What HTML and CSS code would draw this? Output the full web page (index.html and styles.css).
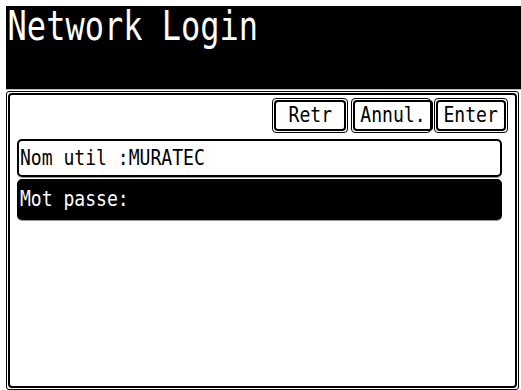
FILE: index.html
```html
<!DOCTYPE html>
<html lang="fr">
<head>
    <meta charset="UTF-8">
    <meta name="viewport" content="width=device-width, initial-scale=1.0">
    <title>Network Login</title>
    <link rel="stylesheet" href="styles.css">
</head>
<body>
    <div class="screen">
        <div class="header">
            <span class="title">Network Login</span>
        </div>

        <div class="panel">
            <div class="panel-inner">
                <div class="actions">
                    <div class="btn btn-retr"><span class="btn-face"><span class="txt">Retr</span></span></div>
                    <div class="btn btn-annul"><span class="btn-face"><span class="txt">Annul.</span></span></div>
                    <div class="btn btn-enter"><span class="btn-face"><span class="txt">Enter</span></span></div>
                </div>

                <div class="field">
                    <span class="txt">Nom util :MURATEC</span>
                </div>
                <div class="field field-active">
                    <span class="txt">Mot passe:</span>
                </div>
            </div>
        </div>
    </div>
</body>
</html>
```

FILE: styles.css
```css
html, body {
    margin: 0;
    padding: 0;
    background: #fff;
}
body {
    font-family: "DejaVu Sans Mono", "Liberation Mono", monospace;
    color: #000;
}
.screen {
    width: 521px;
    height: 390px;
    padding: 6px 0 0 6px;
    box-sizing: border-box;
    display: flex;
    flex-direction: column;
}

/* title bar */
.header {
    height: 83px;
    background: #000;
    border-bottom: 1px solid #bbb;
    color: #fff;
}
.title {
    display: block;
    width: max-content;
    font-size: 40px;
    line-height: 48px;
    margin-top: -4px;
    padding-left: 2px;
    transform: scaleX(0.8);
    transform-origin: left center;
}

/* main frame, double line */
.panel {
    flex: 1;
    width: 513px;
    margin-top: 1px;
    border: 1px solid #000;
    padding: 1px;
    box-sizing: border-box;
    border-radius: 3px;
    display: flex;
}
.panel-inner {
    flex: 1;
    border: 2px solid #000;
    border-radius: 4px;
    padding: 3px 5px 0 5px;
    display: flex;
    flex-direction: column;
}

.txt {
    display: inline-block;
    font-size: 21px;
    line-height: 25px;
    white-space: pre;
    transform: scaleX(0.86);
    transform-origin: left center;
}

/* buttons */
.actions {
    display: flex;
    justify-content: flex-end;
    gap: 3px;
    padding-right: 2px;
}
.btn {
    height: 35px;
    box-sizing: border-box;
    border: 1px solid #000;
    border-radius: 4px;
    padding: 1px;
    display: flex;
}
.btn-retr { width: 76px; }
.btn-annul { width: 80px; }
.btn-enter { width: 74px; }
.btn-face {
    flex: 1;
    border: 2px solid #000;
    border-radius: 4px;
    display: flex;
    align-items: center;
    justify-content: center;
}
.btn-face .txt {
    transform-origin: center center;
}

/* input rows */
.field {
    height: 38px;
    box-sizing: border-box;
    margin: 6px 8px 0 2px;
    border: 2px solid #000;
    border-radius: 5px;
    box-shadow: 0 1px 0 #999;
    padding-left: 1px;
    display: flex;
    align-items: center;
}
.field-active {
    height: 41px;
    margin-top: 2px;
    background: #000;
    color: #fff;
}
```
